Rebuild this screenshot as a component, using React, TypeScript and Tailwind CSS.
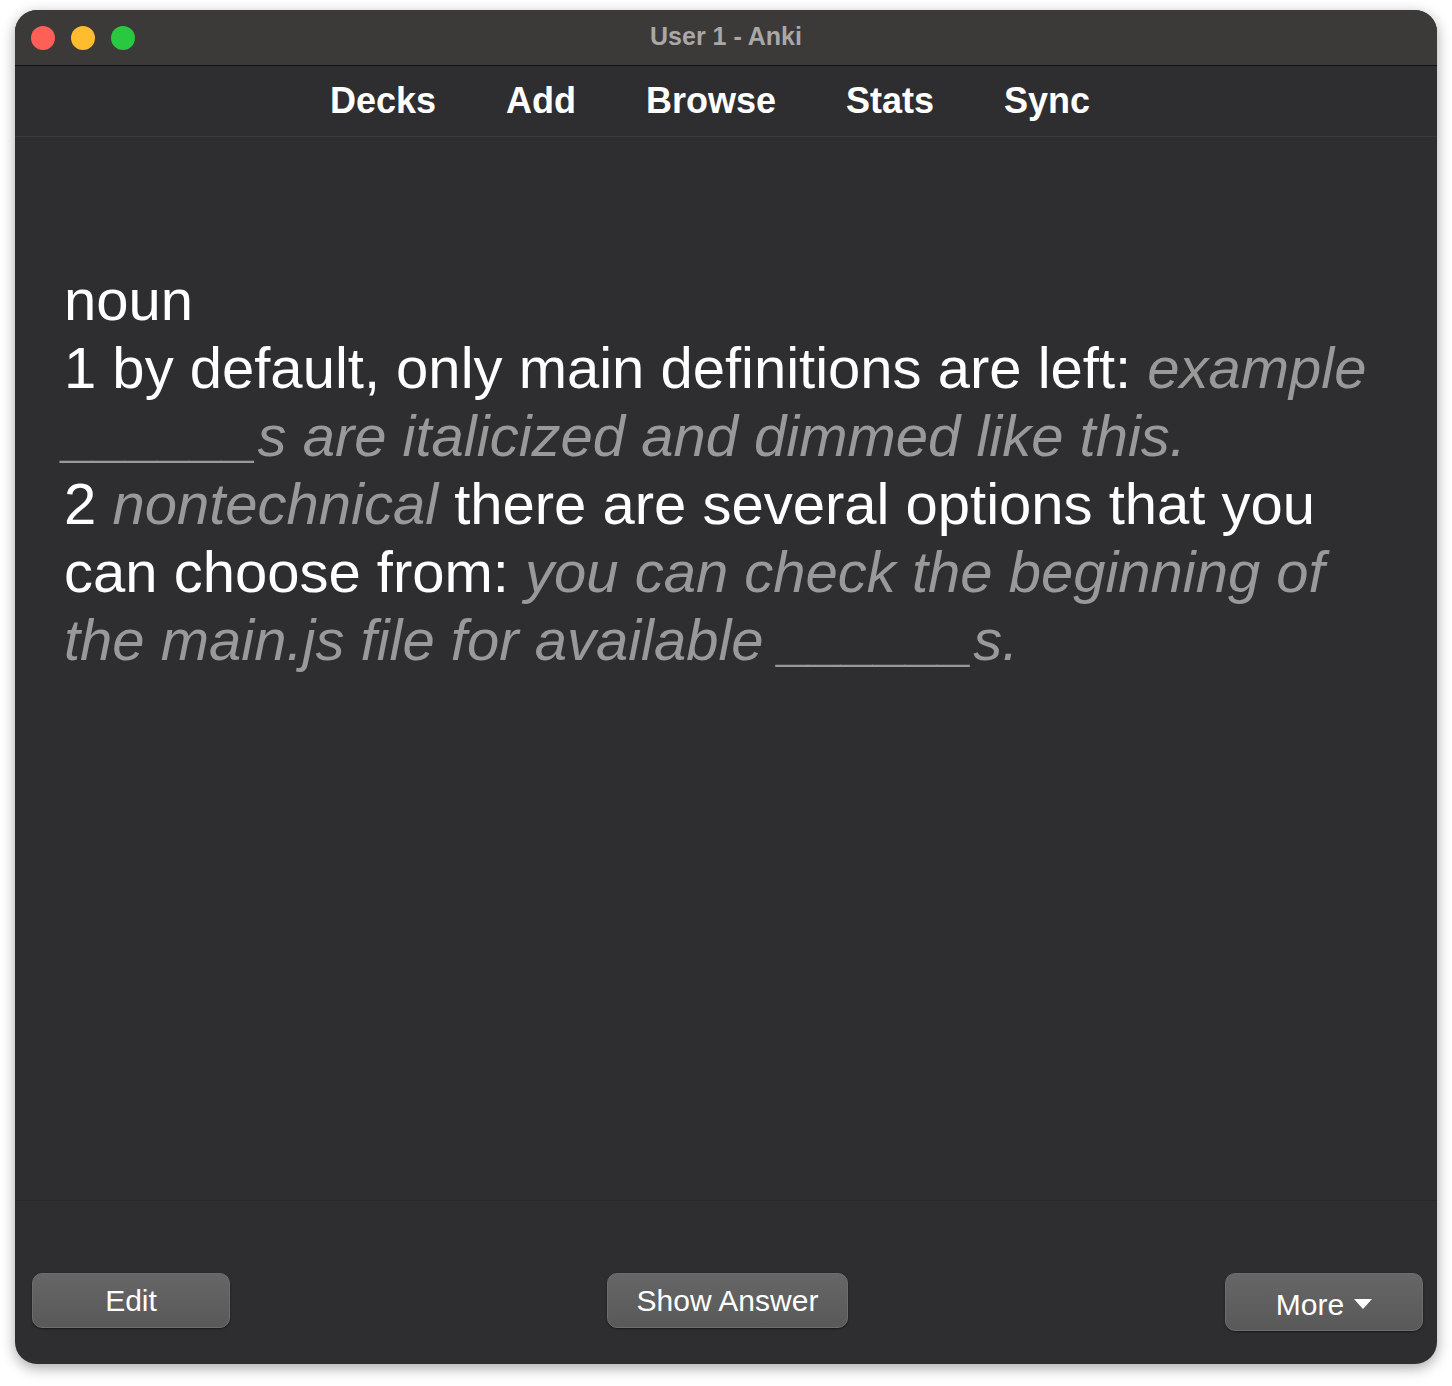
export default function App() {
  const dim = "italic text-[#999999]";
  return (
    <div className="w-[1452px] h-[1386px] bg-white pt-[10px] pl-[15px]" style={{ fontFamily: '"Liberation Sans", Arial, sans-serif' }}>
      <div className="w-[1422px] h-[1354px] rounded-[22px] overflow-hidden bg-[#2e2e30] flex flex-col shadow-[0_4px_14px_rgba(0,0,0,0.35)]">
        <div className="h-[56px] bg-[#3b3a39] border-b border-[#111] flex items-center relative shrink-0">
          <div className="flex gap-[16px] pl-[16px]">
            <div className="w-[24px] h-[24px] rounded-full bg-[#fe5f57]" />
            <div className="w-[24px] h-[24px] rounded-full bg-[#febc2e]" />
            <div className="w-[24px] h-[24px] rounded-full bg-[#28c840]" />
          </div>
          <div className="absolute inset-0 flex items-center justify-center text-[25px] font-bold text-[#a9a8a7] pb-[2px]">User 1 - Anki</div>
        </div>
        <div className="h-[71px] border-b border-[#3a3a3c] flex items-center justify-center gap-[70px] text-[36px] font-bold text-white shrink-0 pr-[32px]">
          <span>Decks</span><span>Add</span><span>Browse</span><span>Stats</span><span>Sync</span>
        </div>
        <div className="flex-1 pt-[129px] pl-[49px] pr-[40px] text-[58px] leading-[68px] text-white">
          <div>noun</div>
          <div>
            1 by default, only main definitions are left: <span className={dim}>example ______s are italicized and dimmed like this.</span>
          </div>
          <div>
            2 <span className={dim}>nontechnical</span> there are several options that you can choose from: <span className={dim}>you can check the beginning of the main.js file for available ______s.</span>
          </div>
        </div>
        <div className="h-[164px] border-t border-[#27272a] flex items-start justify-between pl-[17px] pr-[14px] pt-[72px] shrink-0 text-white text-[30px]">
          <button className="w-[198px] h-[55px] rounded-[10px] bg-gradient-to-b from-[#666] to-[#595959] border border-[#6d6d6d] shadow-[0_1px_2px_rgba(0,0,0,0.5)]">Edit</button>
          <button className="w-[241px] h-[55px] rounded-[10px] bg-gradient-to-b from-[#666] to-[#595959] border border-[#6d6d6d] shadow-[0_1px_2px_rgba(0,0,0,0.5)]">Show Answer</button>
          <button className="w-[198px] h-[58px] rounded-[10px] bg-gradient-to-b from-[#666] to-[#595959] border border-[#6d6d6d] shadow-[0_1px_2px_rgba(0,0,0,0.5)] flex items-center justify-center gap-[10px] pt-[4px]">
            More
            <svg width="18" height="10" viewBox="0 0 18 10"><path d="M0 0h18L9 10z" fill="white" /></svg>
          </button>
        </div>
      </div>
    </div>
  );
}
